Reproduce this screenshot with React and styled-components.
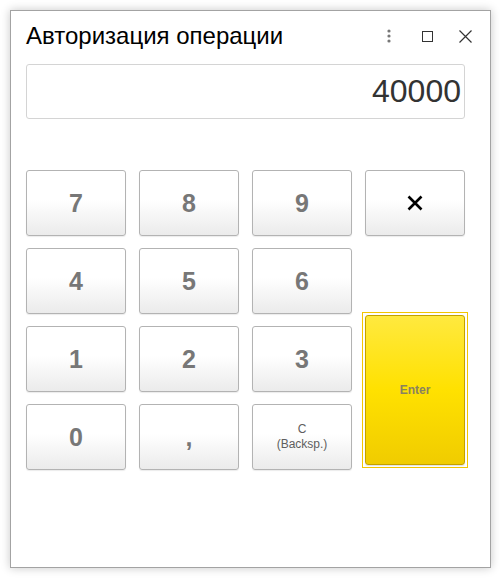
import React from "react";
import styled, { createGlobalStyle } from "styled-components";

const Global = createGlobalStyle`
  html, body { margin: 0; padding: 0; background: #fff; }
  body { font-family: "Liberation Sans", Arial, sans-serif; }
`;

const Page = styled.div`
  padding: 10px;
  width: 500px;
  height: 578px;
  box-sizing: border-box;
`;

const Window = styled.div`
  width: 481px;
  height: 558px;
  box-sizing: border-box;
  border: 1px solid #a3a3a3;
  background: #fff;
  box-shadow: 0 0 9px rgba(0, 0, 0, 0.22);
  padding: 0 25px 0 15px;
  display: flex;
  flex-direction: column;
`;

const Header = styled.div`
  display: flex;
  align-items: center;
  height: 24px;
  margin-top: 13px;
`;

const Title = styled.div`
  flex: 1;
  font-size: 24px;
  color: #000;
  line-height: 24px;
  white-space: nowrap;
`;

const HeaderIcons = styled.div`
  display: flex;
  align-items: center;
  margin-right: -8px;
`;

const IconBox = styled.div`
  width: ${(p) => p.$w}px;
  height: 16px;
  display: flex;
  align-items: center;
  justify-content: center;
  margin-left: ${(p) => p.$ml || 0}px;
`;

const Field = styled.div`
  margin-top: 16px;
  height: 55px;
  box-sizing: border-box;
  border: 1px solid #d4d4d4;
  border-radius: 3px;
  display: flex;
  align-items: center;
  justify-content: flex-end;
  padding-right: 3px;
  font-size: 32px;
  color: #333;
`;

const Keypad = styled.div`
  margin-top: 51px;
  display: flex;
  gap: 13px;
`;

const Grid = styled.div`
  display: grid;
  grid-template-columns: repeat(3, 100px);
  grid-auto-rows: 66px;
  column-gap: 13px;
  row-gap: 12px;
`;

const Side = styled.div`
  display: flex;
  flex-direction: column;
  align-items: flex-start;
`;

const Key = styled.button`
  width: 100px;
  height: 66px;
  box-sizing: border-box;
  border: 1px solid #b3b3b3;
  border-radius: 3px;
  background: linear-gradient(#ffffff 0%, #ffffff 45%, #ebebeb 100%);
  box-shadow: 0 1px 1px rgba(0, 0, 0, 0.08);
  display: flex;
  flex-direction: column;
  align-items: center;
  justify-content: center;
  padding: 0;
  font-family: "Liberation Sans", Arial, sans-serif;
  font-weight: ${(p) => (p.$small ? 400 : 700)};
  font-size: ${(p) => (p.$small ? 12 : 25)}px;
  line-height: ${(p) => (p.$small ? 15 : 28)}px;
  color: ${(p) => (p.$small ? "#5e5e5e" : "#777")};
  cursor: pointer;
`;

const FocusFrame = styled.div`
  margin-top: 76px;
  margin-left: -3px;
  padding: 2px;
  border: 1px solid #f2c500;
  display: flex;
`;

const EnterKey = styled.button`
  width: 100px;
  height: 150px;
  box-sizing: border-box;
  border: 1px solid #c2a000;
  border-radius: 3px;
  background: linear-gradient(#ffe93f 0%, #ffe100 50%, #f0cc00 100%);
  box-shadow: 0 1px 1px rgba(0, 0, 0, 0.12);
  font-family: "Liberation Sans", Arial, sans-serif;
  font-size: 12px;
  font-weight: 700;
  color: #8a8160;
  padding: 0;
  cursor: pointer;
`;

const digits = ["7", "8", "9", "4", "5", "6", "1", "2", "3", "0", ","];

export default function App() {
  return (
    <Page>
      <Global />
      <Window>
        <Header>
          <Title>Авторизация операции</Title>
          <HeaderIcons>
            <IconBox $w={14}>
              <svg width="4" height="14" viewBox="0 0 4 14">
                <circle cx="2" cy="2" r="1.6" fill="#777" />
                <circle cx="2" cy="7" r="1.6" fill="#777" />
                <circle cx="2" cy="12" r="1.6" fill="#777" />
              </svg>
            </IconBox>
            <IconBox $w={16} $ml={24}>
              <svg width="12" height="11" viewBox="0 0 12 11">
                <rect x="0.5" y="0.5" width="10" height="10" fill="none" stroke="#333" strokeWidth="1" />
              </svg>
            </IconBox>
            <IconBox $w={16} $ml={21}>
              <svg width="13" height="13" viewBox="0 0 13 13">
                <path d="M0.5 0.5 L12.5 12.5 M12.5 0.5 L0.5 12.5" stroke="#333" strokeWidth="1.2" />
              </svg>
            </IconBox>
          </HeaderIcons>
        </Header>
        <Field>40000</Field>
        <Keypad>
          <Grid>
            {digits.map((d) => (
              <Key key={d}>{d}</Key>
            ))}
            <Key $small>
              <span>C</span>
              <span>(Backsp.)</span>
            </Key>
          </Grid>
          <Side>
            <Key>
              <svg width="16" height="16" viewBox="0 0 16 16">
                <path d="M1.5 1.5 L14.5 14.5 M14.5 1.5 L1.5 14.5" stroke="#000" strokeWidth="2.6" />
              </svg>
            </Key>
            <FocusFrame>
              <EnterKey>Enter</EnterKey>
            </FocusFrame>
          </Side>
        </Keypad>
      </Window>
    </Page>
  );
}
